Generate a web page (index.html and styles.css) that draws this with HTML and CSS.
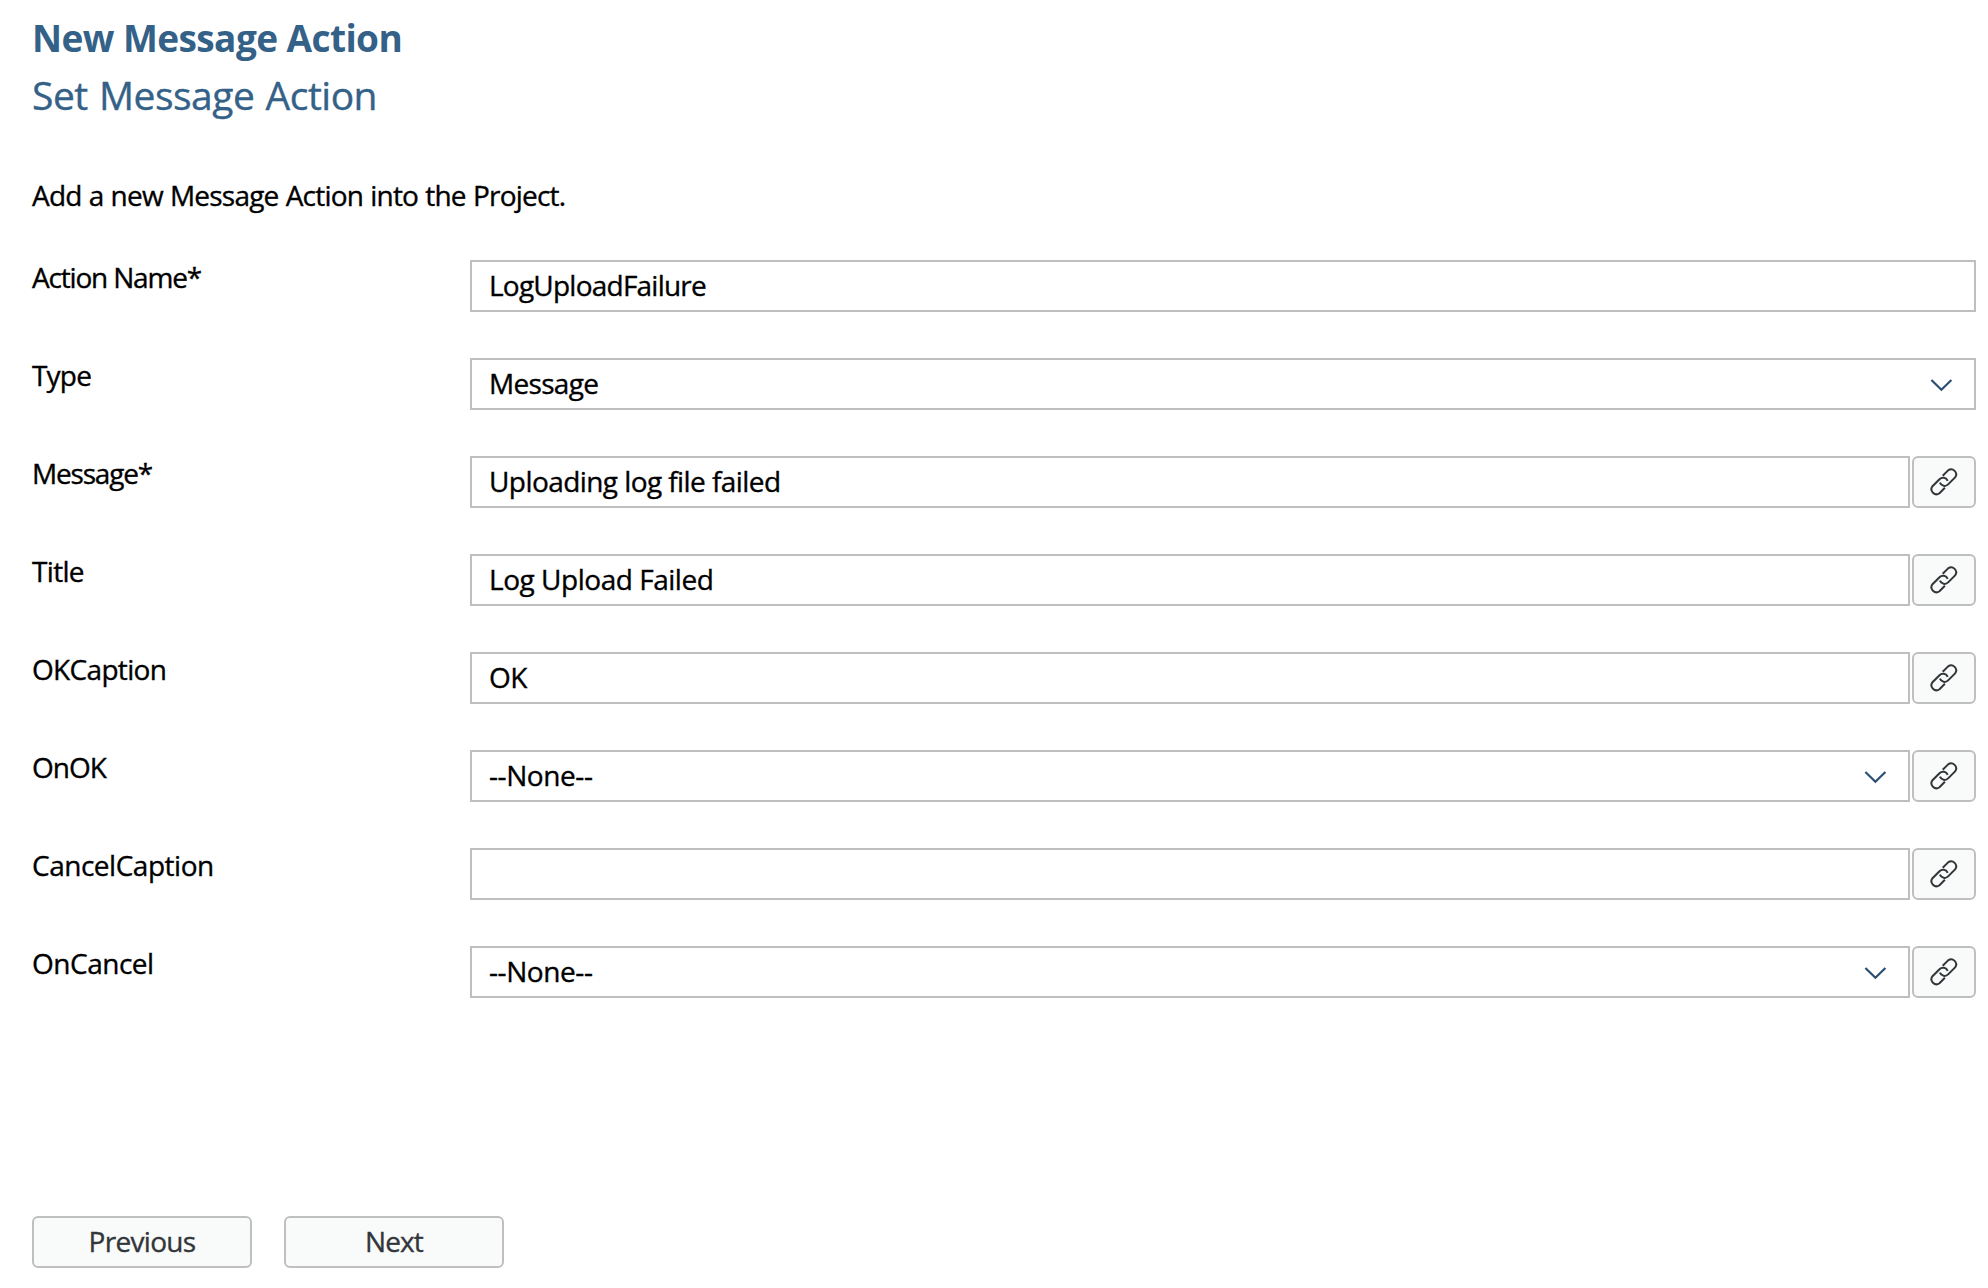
FILE: index.html
```html
<!DOCTYPE html>
<html lang="en">
<head>
<meta charset="utf-8">
<title>New Message Action</title>
<link rel="stylesheet" href="styles.css">
</head>
<body>
<svg class="defs" aria-hidden="true">
  <symbol id="link" viewBox="0 0 28 28"><g fill="none" stroke="#32363a" stroke-width="2"><path d="M12.7 7.8L18.1 2.4A5 5 0 0 1 25.1 9.4L18.1 16.4A5 5 0 0 1 9.9 14.7"/><path d="M14.9 19.8L9.5 25.2A5 5 0 0 1 2.5 18.2L9.5 11.2A5 5 0 0 1 17.7 12.9"/></g></symbol>
  <symbol id="chevron" viewBox="0 0 24 14"><path d="M1.4 2l10 9.8 10-9.8" fill="none" stroke="#2b4f73" stroke-width="2.2"/></symbol>
</svg>
<main class="wizard">
  <header class="header">
    <h1 class="title">New Message Action</h1>
    <h2 class="subtitle">Set Message Action</h2>
  </header>
  <p class="intro">Add a new Message Action into the Project.</p>
  <form class="form">
    <div class="row"><label class="label label-action-name">Action Name*</label><div class="field value-action-name">LogUploadFailure</div></div>
    <div class="row"><label class="label label-type">Type</label><div class="field">Message<svg class="chevron"><use href="#chevron"/></svg></div></div>
    <div class="row"><label class="label label-message">Message*</label><div class="field value-message">Uploading log file failed</div><button type="button" class="bind" aria-label="Bind"><svg class="link"><use href="#link"/></svg></button></div>
    <div class="row"><label class="label">Title</label><div class="field value-title">Log Upload Failed</div><button type="button" class="bind" aria-label="Bind"><svg class="link"><use href="#link"/></svg></button></div>
    <div class="row"><label class="label">OKCaption</label><div class="field value-ok">OK</div><button type="button" class="bind" aria-label="Bind"><svg class="link"><use href="#link"/></svg></button></div>
    <div class="row"><label class="label label-on-ok">OnOK</label><div class="field value-none">--None--<svg class="chevron"><use href="#chevron"/></svg></div><button type="button" class="bind" aria-label="Bind"><svg class="link"><use href="#link"/></svg></button></div>
    <div class="row"><label class="label label-cancel">CancelCaption</label><div class="field"></div><button type="button" class="bind" aria-label="Bind"><svg class="link"><use href="#link"/></svg></button></div>
    <div class="row"><label class="label label-cancel">OnCancel</label><div class="field value-none">--None--<svg class="chevron"><use href="#chevron"/></svg></div><button type="button" class="bind" aria-label="Bind"><svg class="link"><use href="#link"/></svg></button></div>
  </form>
  <footer class="actions"><button type="button" class="btn">Previous</button><button type="button" class="btn btn-next">Next</button></footer>
</main>
</body>
</html>
```
FILE: styles.css
```css
* { box-sizing: border-box; }
body { margin: 0; background: #fff; color: #000; font: 28px/40px "Open Sans", sans-serif; letter-spacing: -0.68px; -webkit-text-stroke: 0.35px currentColor; }
.defs { position: absolute; width: 0; height: 0; }
.wizard { height: 1288px; padding: 10px 12px 0 32px; display: flex; flex-direction: column; }
.title, .subtitle, .intro { margin: 0; white-space: nowrap; }
.title { color: #346187; font-size: 37px; font-weight: 700; line-height: 56px; letter-spacing: -0.58px; -webkit-text-stroke: 0; }
.subtitle { color: #346187; font-size: 39px; font-weight: 400; line-height: 58px; letter-spacing: -0.5px; word-spacing: 1.6px; }
.intro { margin-top: 51px; letter-spacing: -0.78px; word-spacing: 0.6px; }
.form { display: flex; flex-direction: column; gap: 46px; margin-top: 45px; }
.row { display: flex; gap: 2px; height: 52px; }
.label { width: 436px; margin-top: -3px; }
.label-action-name { letter-spacing: -1.18px; }
.label-type { letter-spacing: -0.8px; }
.label-message { letter-spacing: -1.19px; }
.label-on-ok { letter-spacing: -1px; }
.label-cancel { letter-spacing: -0.48px; }
.field { flex: 1; display: flex; align-items: center; justify-content: space-between; border: 2px solid #bfbfbf; padding: 0 20px 2px 17px; }
.value-action-name { letter-spacing: -0.77px; }
.value-message { letter-spacing: -0.57px; }
.value-title { letter-spacing: -0.47px; }
.value-ok { letter-spacing: -0.6px; }
.value-none { letter-spacing: -0.42px; }
.bind { width: 64px; display: flex; align-items: center; justify-content: center; background: #f9fbfa; border: 2px solid #bfbfbf; border-radius: 6px; padding: 0 1px 0 0; }
.link { width: 28px; height: 28px; }
.chevron { width: 24px; height: 14px; margin-top: 3px; }
.actions { display: flex; gap: 32px; margin-top: 218px; }
.btn { width: 220px; height: 52px; font: inherit; letter-spacing: -0.7px; color: #32363a; background: #f9fbfa; border: 2px solid #bfbfbf; border-radius: 6px; padding: 0 0 2px; }
.btn-next { letter-spacing: -0.9px; }
```
